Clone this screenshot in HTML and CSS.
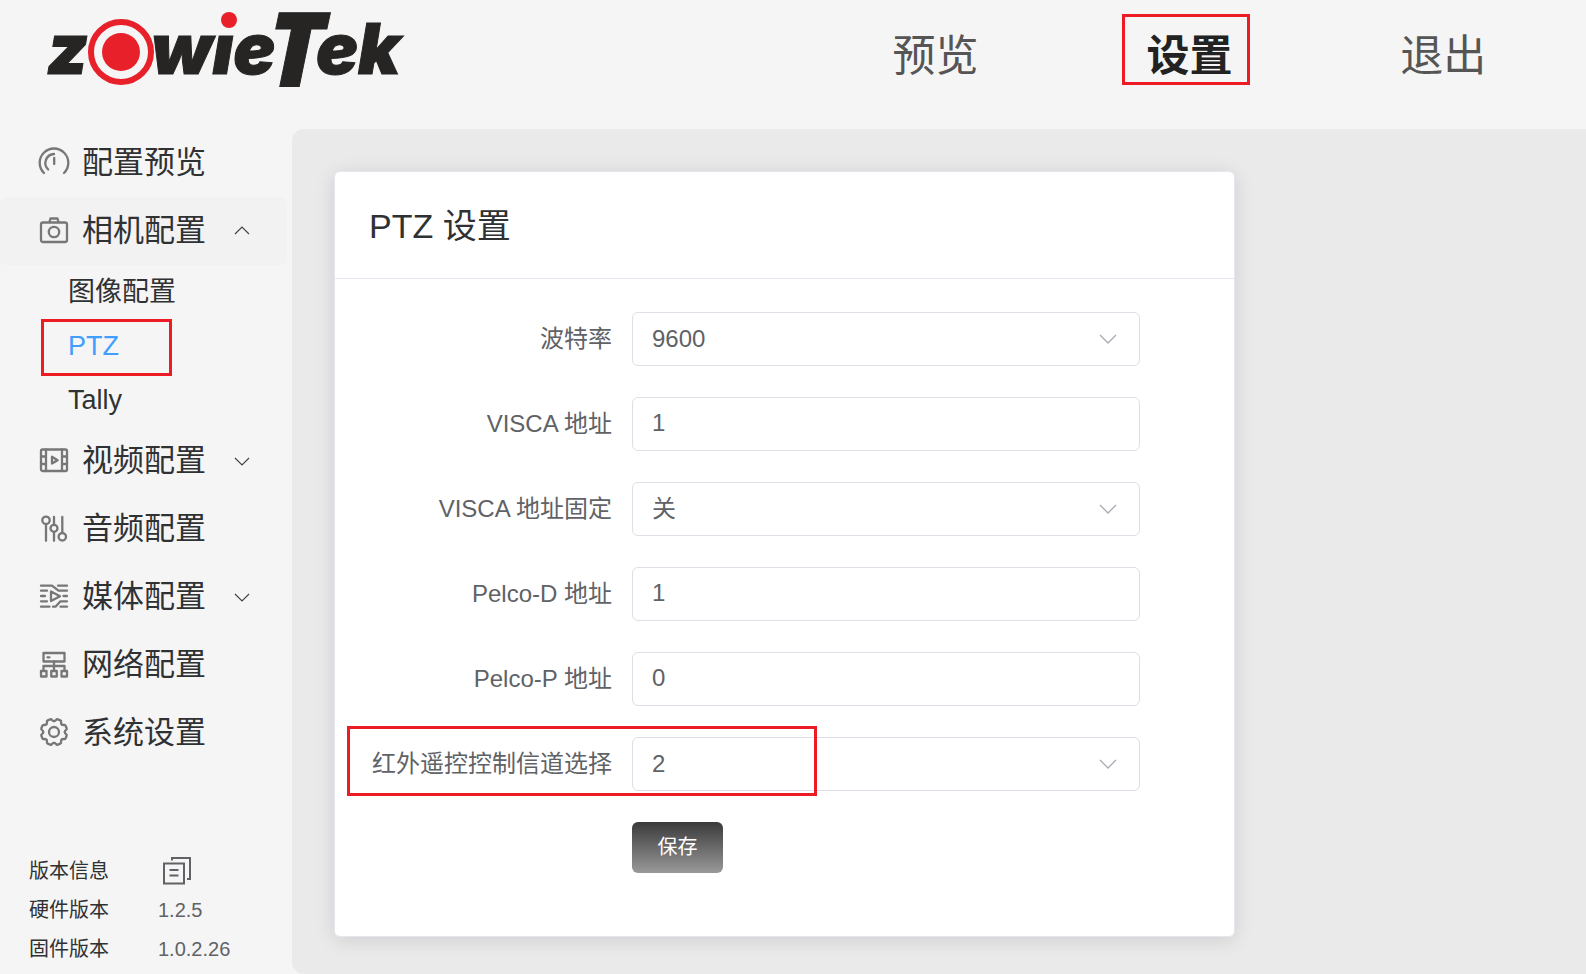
FILE: index.html
```html
<!DOCTYPE html>
<html lang="zh-CN">
<head>
<meta charset="utf-8">
<meta name="viewport" content="width=device-width, initial-scale=1">
<title>PTZ 设置</title>
<link rel="stylesheet" href="styles.css">
</head>
<body>
<header class="topbar">
  <a class="logo" href="#" aria-label="ZowieTek">
    <svg class="logo-art" viewBox="0 0 360 90">
      <text class="logo-text" x="0" y="74">z</text>
      <text class="logo-text" x="104" y="74">wıe</text>
      <text class="logo-text logo-cap" x="221" y="86">T</text>
      <text class="logo-text" x="269" y="74">ek</text>
      <circle class="logo-ring" cx="74" cy="52" r="30"/>
      <circle class="logo-dot" cx="74" cy="52" r="19"/>
      <circle class="logo-dot" cx="182" cy="20" r="8"/>
    </svg>
  </a>
  <nav class="topnav">
    <a class="topnav-link" href="#">预览</a>
    <a class="topnav-link active marked" href="#">设置</a>
    <a class="topnav-link" href="#">退出</a>
  </nav>
</header>

<div class="layout">
  <aside class="sidebar">
    <nav class="menu">
      <a class="menu-item" href="#">
        <svg class="icon" viewBox="0 0 32 32"><path d="M6 26A14.3 14.3 0 1 1 26 26M10.2 22.5A9 9 0 0 1 16 7M16.2 11v6"/></svg>
        <span class="menu-text">配置预览</span>
      </a>
      <a class="menu-item open" href="#">
        <svg class="icon" viewBox="0 0 32 32"><rect x="3" y="7.5" width="26" height="19.5" rx="2"/><path d="M11.5 7l1-3.5h7l1 3.5"/><circle cx="16" cy="17" r="5.2"/></svg>
        <span class="menu-text">相机配置</span>
        <svg class="arrow" viewBox="0 0 16 16"><path d="M1 11l7-7 7 7"/></svg>
      </a>
      <div class="submenu">
        <a class="submenu-item" href="#">图像配置</a>
        <a class="submenu-item active marked" href="#">PTZ</a>
        <a class="submenu-item" href="#">Tally</a>
      </div>
      <a class="menu-item" href="#">
        <svg class="icon" viewBox="0 0 32 32"><rect x="3" y="4.5" width="26" height="21.5" rx="1.5"/><path d="M8 4.5V26M24 4.5V26M3 11.5h5M3 19h5M24 11.5h5M24 19h5M14 11.8v6.8l5.6-3.4z"/></svg>
        <span class="menu-text">视频配置</span>
        <svg class="arrow" viewBox="0 0 16 16"><path d="M1 5l7 7 7-7"/></svg>
      </a>
      <a class="menu-item" href="#">
        <svg class="icon" viewBox="0 0 32 32"><circle cx="8" cy="7.3" r="3.7"/><circle cx="16" cy="15.3" r="3.5"/><circle cx="24.3" cy="23.8" r="3.7"/><path d="M8 11.3v16.5M16 3.8v8M16 19.3v8.5M24.3 3.8v16"/></svg>
        <span class="menu-text">音频配置</span>
      </a>
      <a class="menu-item" href="#">
        <svg class="icon" viewBox="0 0 32 32"><path d="M3 4.7h11l6.5 5H29M20 4.7H29M3 9.7h6M3 15h4M25.5 15H29M3 20.3h6M29 20.3h-6.5l-5 5.4h-2.5M3 25.7h8.5M22.5 25.7H29M13 10.5v9.5l9-4.8z"/></svg>
        <span class="menu-text">媒体配置</span>
        <svg class="arrow" viewBox="0 0 16 16"><path d="M1 5l7 7 7-7"/></svg>
      </a>
      <a class="menu-item" href="#">
        <svg class="icon" viewBox="0 0 32 32"><rect x="5.5" y="4" width="21" height="8.5"/><path d="M9.5 8.3h2M16 12.5v9M5.5 21.5v-4.500h21v4.500"/><rect x="3" y="22" width="5.5" height="5.5"/><rect x="13.25" y="22" width="5.5" height="5.5"/><rect x="23.5" y="22" width="5.5" height="5.5"/></svg>
        <span class="menu-text">网络配置</span>
      </a>
      <a class="menu-item" href="#">
        <svg class="icon" viewBox="0 1 32 32">
          <defs><path id="tooth" d="M11.87 6.02Q13 5.4 13.3 4Q13.5 2.9 14.6 2.9H17.4Q18.5 2.9 18.7 4Q19 5.4 20.13 6.02"/></defs>
          <use href="#tooth" transform="rotate(22.5 16 16)"/><use href="#tooth" transform="rotate(67.5 16 16)"/>
          <use href="#tooth" transform="rotate(112.5 16 16)"/><use href="#tooth" transform="rotate(157.5 16 16)"/>
          <use href="#tooth" transform="rotate(202.5 16 16)"/><use href="#tooth" transform="rotate(247.5 16 16)"/>
          <use href="#tooth" transform="rotate(292.5 16 16)"/><use href="#tooth" transform="rotate(337.5 16 16)"/>
          <circle cx="16" cy="16" r="5"/>
        </svg>
        <span class="menu-text">系统设置</span>
      </a>
    </nav>
    <dl class="versions">
      <dt>版本信息</dt>
      <dd><button class="copy" type="button" aria-label="复制版本信息">
        <svg class="copy-icon" viewBox="0 0 28 28"><rect x="1" y="6.5" width="20" height="20"/><path d="M9 3.5V1h18v21h-3M6.5 13h9M6.5 18.5h9"/></svg>
      </button></dd>
      <dt>硬件版本</dt>
      <dd>1.2.5</dd>
      <dt>固件版本</dt>
      <dd>1.0.2.26</dd>
    </dl>
  </aside>

  <main class="content">
    <section class="card">
      <h1 class="card-title">PTZ 设置</h1>
      <form class="form">
        <div class="row">
          <label class="label" for="baud">波特率</label>
          <div class="field">
            <select class="control" id="baud"><option>9600</option></select>
            <svg class="chevron" viewBox="0 0 18 18"><path d="M1 5l8 8 8-8"/></svg>
          </div>
        </div>
        <div class="row">
          <label class="label" for="visca">VISCA 地址</label>
          <div class="field"><input class="control" id="visca" type="text" value="1"></div>
        </div>
        <div class="row">
          <label class="label" for="visca-fixed">VISCA 地址固定</label>
          <div class="field">
            <select class="control" id="visca-fixed"><option>关</option></select>
            <svg class="chevron" viewBox="0 0 18 18"><path d="M1 5l8 8 8-8"/></svg>
          </div>
        </div>
        <div class="row">
          <label class="label" for="pelco-d">Pelco-D 地址</label>
          <div class="field"><input class="control" id="pelco-d" type="text" value="1"></div>
        </div>
        <div class="row">
          <label class="label" for="pelco-p">Pelco-P 地址</label>
          <div class="field"><input class="control" id="pelco-p" type="text" value="0"></div>
        </div>
        <div class="row marked">
          <label class="label" for="ir">红外遥控控制信道选择</label>
          <div class="field">
            <select class="control" id="ir"><option>2</option></select>
            <svg class="chevron" viewBox="0 0 18 18"><path d="M1 5l8 8 8-8"/></svg>
          </div>
        </div>
        <div class="row">
          <button class="save" type="button">保存</button>
        </div>
      </form>
    </section>
  </main>
</div>
</body>
</html>
```
FILE: styles.css
```css
*,
*::after {
  box-sizing: border-box;
}

body {
  margin: 0;
  min-height: 100vh;
  display: flex;
  flex-direction: column;
  background: #f5f5f5;
  color: #303133;
  font-family: "Liberation Sans", "Noto Sans CJK SC", sans-serif;
}

a {
  color: inherit;
  text-decoration: none;
}

/* Top bar */
.topbar {
  display: flex;
  justify-content: space-between;
  align-items: flex-start;
  height: 129px;
  padding-right: 1%;
}

.logo {
  margin-left: 47px;
}

.logo-art {
  display: block;
  width: 360px;
  height: 90px;
  overflow: visible;
}

.logo-text {
  font: italic 900 70px Inter, "Open Sans", sans-serif;
  fill: #262524;
  stroke: #262524;
  stroke-width: 1;
}

.logo-cap {
  font-family: "Open Sans", sans-serif;
  font-size: 102px;
}

.logo-ring {
  fill: #f5f5f5;
  stroke: #e8202a;
  stroke-width: 6;
}

.logo-dot {
  fill: #e8202a;
}

.topnav {
  display: flex;
  width: 48.5%;
}

.topnav-link {
  position: relative;
  flex: 1;
  padding-top: 24px;
  color: #555;
  font-size: 43px;
  line-height: 64px;
  text-align: center;
}

.topnav-link.active {
  color: #222;
  font-weight: 700;
}

/* Red annotation frames */
.marked::after {
  content: "";
  position: absolute;
  border: 3px solid #ed1c24;
  pointer-events: none;
}

.topnav-link.marked::after {
  top: 14px;
  left: 50%;
  width: 128px;
  height: 71px;
  margin-left: -67px;
}

.submenu-item.marked::after {
  top: 0;
  left: 41px;
  width: 131px;
  height: 57px;
}

.row.marked::after {
  top: -11px;
  left: 12px;
  width: 470px;
  height: 70px;
}

/* Sidebar */
.layout {
  flex: 1;
  display: grid;
  grid-template-columns: 292px 1fr;
}

.sidebar {
  display: flex;
  flex-direction: column;
  justify-content: space-between;
  padding: 0 5px 5px 0;
}

.menu-item {
  display: flex;
  align-items: center;
  height: 68px;
  padding: 0 37px 0 38px;
  border-radius: 6px;
  font-size: 31px;
  line-height: 44px;
}

.menu-item.open {
  background: #f2f2f2;
}

.icon {
  width: 32px;
  height: 32px;
  margin-right: 12px;
  fill: none;
  stroke: #777;
  stroke-width: 2.3;
  stroke-linecap: round;
  stroke-linejoin: round;
}

.arrow {
  width: 16px;
  height: 16px;
  margin-left: auto;
  fill: none;
  stroke: #444;
  stroke-width: 1.2;
}

.submenu-item {
  position: relative;
  display: block;
  padding-left: 68px;
  font-size: 27px;
  line-height: 54px;
}

.submenu-item.active {
  color: #409eff;
}

.versions {
  display: grid;
  grid-template-columns: 129px 1fr;
  margin: 0;
  padding-left: 29px;
  font-size: 20px;
  line-height: 39px;
}

.versions dd {
  margin: 0;
  color: #606266;
}

.copy {
  display: block;
  margin: 5px 0 0 5px;
  padding: 0;
  border: 0;
  background: none;
}

.copy-icon {
  display: block;
  width: 28px;
  height: 28px;
  fill: none;
  stroke: #606266;
  stroke-width: 2;
}

/* Content */
.content {
  padding: 42px 0 37px 42px;
  border-radius: 12px 0 0 12px;
  background: #eaeaea;
}

.card {
  width: 72%;
  min-height: 766px;
  border: 1px solid #e4e7ed;
  border-radius: 6px;
  background: #fff;
  box-shadow: 0 3px 20px rgba(0, 0, 0, 0.12);
}

.card-title {
  margin: 0;
  padding: 27px 34px 25px;
  border-bottom: 1px solid #e4e7ed;
  font-size: 34px;
  font-weight: 400;
  line-height: 54px;
}

.form {
  display: flex;
  flex-direction: column;
  gap: 31px;
  padding: 33px 94px 0 0;
}

.row {
  position: relative;
  display: grid;
  grid-template-columns: 277px 1fr;
  column-gap: 20px;
}

.label {
  color: #606266;
  font-size: 24px;
  line-height: 54px;
  text-align: right;
}

.field {
  position: relative;
}

.control {
  display: block;
  width: 100%;
  height: 54px;
  padding: 0 19px 2px;
  border: 1px solid #dcdfe6;
  border-radius: 6px;
  appearance: none;
  background: #fff;
  color: #606266;
  font: inherit;
  font-size: 24px;
}

.chevron {
  position: absolute;
  top: 18px;
  right: 23px;
  width: 18px;
  height: 18px;
  fill: none;
  stroke: #a8abb2;
  stroke-width: 1.3;
  pointer-events: none;
}

.save {
  grid-column: 2;
  justify-self: start;
  width: 91px;
  height: 51px;
  padding: 0 0 4px;
  border: 0;
  border-radius: 6px;
  background: linear-gradient(#3a3a3a, #999);
  color: #fff;
  font: inherit;
  font-size: 20px;
}
```
